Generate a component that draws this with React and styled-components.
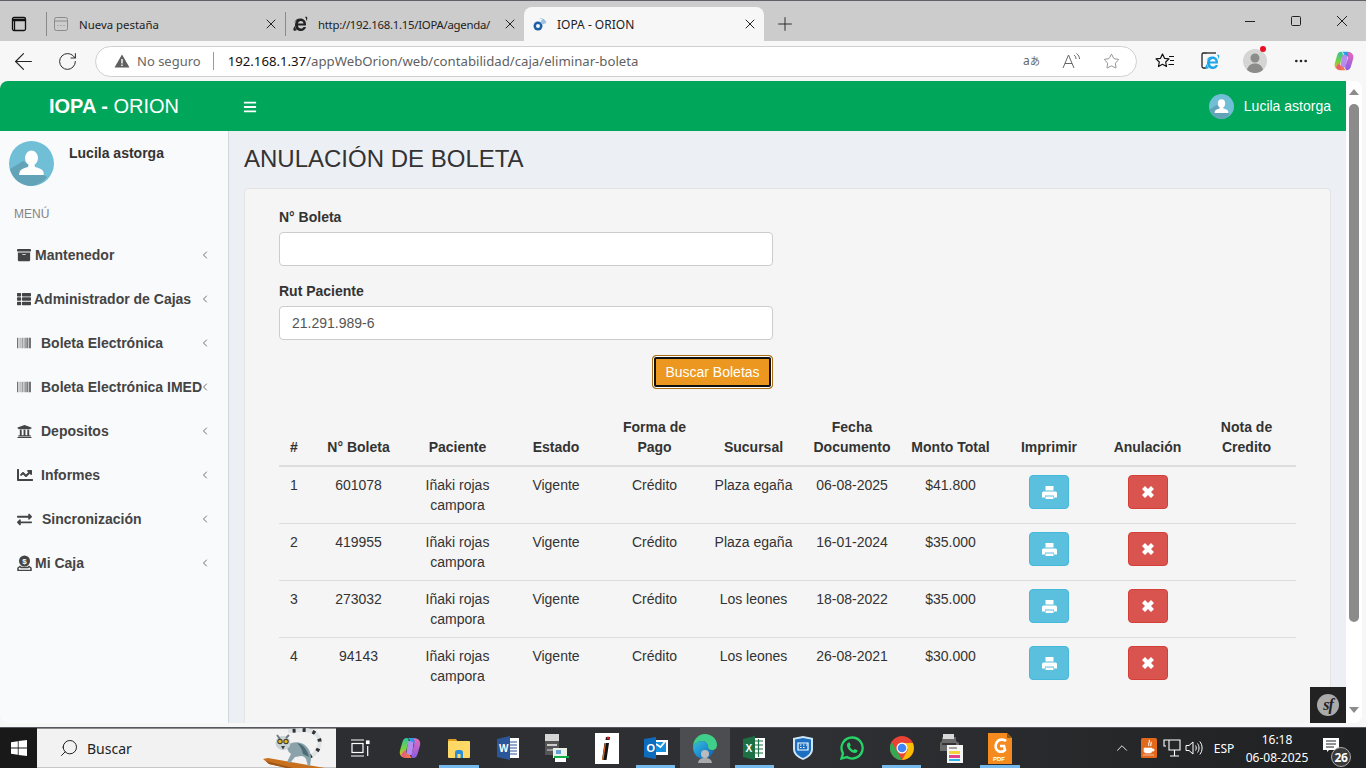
import React from 'react';
import styled, { createGlobalStyle } from 'styled-components';
import { FaArchive, FaThList, FaBarcode, FaUniversity, FaChartLine, FaExchangeAlt, FaBars } from 'react-icons/fa';
import { ArrowLeft, RotateCw, Star, X, Plus, ChevronUp, ChevronLeft, Search, MoreHorizontal } from 'lucide-react';

const Global = createGlobalStyle`
  html, body { margin: 0; padding: 0; height: 100%; overflow: hidden; }
  body { font-family: "Liberation Sans", Arial, sans-serif; font-size: 14px; color: #333; }
  * { box-sizing: border-box; }
`;

const Win = styled.div`
  width: 1366px; height: 768px; display: flex; flex-direction: column; background: #f7f7f7; overflow: hidden;
`;
const TabBar = styled.div`
  height: 41px; flex: none; display: flex; align-items: stretch; background: #cccccc; border-top: 1px solid #5f6266; padding-right: 1px;
`;
const StripBtn = styled.div`
  width: 38px; display: flex; align-items: center; justify-content: center; padding-top: 6px;
`;
const TabSep = styled.div`
  width: 1px; height: 24px; align-self: center; background: #8a8a8a; margin-left: ${p => p.$ml || 0}px; margin-top: 6px;
`;
const Tab = styled.div`
  width: ${p => p.$w}px; display: flex; align-items: center; gap: ${p => p.$gap || 10}px; padding: 6px 6px 0 ${p => p.$pl || 6}px;
  font-family: "Noto Sans", sans-serif; font-size: 11.4px; color: #222; white-space: nowrap; overflow: hidden;
  ${p => p.$active && 'font-size: 12px; background:#f7f7f7; border-radius: 8px 8px 0 0; margin-top: 6px; padding-top: 0;'}
`;
const TabTitle = styled.span`
  flex: 1; min-width: 0;
  ${p => p.$tight && 'letter-spacing: -0.28px; margin-right: -5px;'}
`;
const NewTab = styled.div`
  width: 42px; display: flex; align-items: center; justify-content: center; color: #222; padding-top: 6px;
`;
const Grow = styled.div`flex: 1;`;
const WinBtn = styled.div`
  width: 46px; display: flex; align-items: center; justify-content: center;
`;
const ToolBar = styled.div`
  height: 40px; flex: none; display: flex; align-items: center; padding-left: 1px; background: #f7f7f7;
`;
const NavBtn = styled.div`
  width: ${p => p.$w || 44}px; display: flex; align-items: center; justify-content: center; color: #222; position: relative;
`;
const Address = styled.div`
  width: 1042px; height: 31px; margin: 0 6px 0 6px; border: 1px solid #d0d0d0; border-radius: 16px; background: #fff;
  display: flex; align-items: center; padding-left: 18px; font-family: "Noto Sans", sans-serif; font-size: 13.2px; color: #5f5f5f;
`;
const NoSecure = styled.span`margin-left: 7px; color: #666; font-size: 13px;`;
const AddrSep = styled.div`width: 1px; height: 18px; background: #9a9a9a; margin: 0 14px 0 12px;`;
const Host = styled.span`color: #111;`;
const AddrIcons = styled.div`
  margin-left: auto; display: flex; align-items: center; gap: 21px; padding-right: 16px; color: #666;
`;
const Viewport = styled.div`
  height: 642px; flex: none; display: flex; margin: 0 4px 4px 0;
`;
const Page = styled.div`
  width: 1346px; height: 642px; position: relative; overflow: hidden; border-radius: 8px 0 0 8px; display: flex; flex-direction: column; background: #ecf0f5;
`;
const TopBar = styled.header`
  height: 50px; flex: none; background: #00a65a; display: flex; align-items: center; color: #fff;
`;
const Logo = styled.div`
  width: 228px; padding-left: 49px; font-size: 20px; line-height: 50px; white-space: nowrap;
  b { font-weight: 700; }
`;
const Burger = styled.div`
  width: 44px; display: flex; justify-content: center; font-size: 14px; padding-top: 1px;
`;
const TopUser = styled.div`
  margin-left: auto; display: flex; align-items: center; gap: 10px; padding-right: 15px; font-size: 14px;
`;
const Body = styled.div`
  flex: 1; display: flex; min-height: 0;
`;
const Side = styled.aside`
  width: 229px; flex: none; background: #f9fafc; border-right: 1px solid #d2d6de;
`;
const UserPanel = styled.div`
  height: 72px; padding: 10px 9px; display: flex; gap: 15px; font-weight: 700; color: #333;
  span { line-height: 24px; }
`;
const MenuLabel = styled.div`
  height: 22px; line-height: 22px; padding-left: 14px; margin-bottom: 8px; font-size: 12px; color: #848484;
`;
const MenuRow = styled.div`
  height: 44px; display: flex; align-items: center; padding-left: 17px; font-weight: 700; color: #444; position: relative; white-space: nowrap;
`;
const MenuIcon = styled.span`
  width: ${p => p.$w}px; flex: none; display: flex; align-items: center; font-size: ${p => p.$fs || 14}px;
`;
const Chevron = styled.span`
  position: absolute; left: 199px; top: 16px; color: #555; display: flex;
`;
const Content = styled.main`
  flex: 1; padding: 15px 15px 0; overflow: hidden;
`;
const Title = styled.h1`
  margin: 0 0 16px; font-size: 24px; font-weight: 400; line-height: 26px; color: #333;
`;
const Well = styled.section`
  min-height: 560px; background: #f5f5f5; border: 1px solid #e3e3e3; border-radius: 4px; padding: 18px 34px;
`;
const Form = styled.div`width: 494px;`;
const Label = styled.label`
  display: block; font-weight: 700; line-height: 20px; margin-bottom: 5px; color: #333;
`;
const Input = styled.input`
  display: block; width: 100%; height: 34px; padding: 6px 12px; margin-bottom: 15px; border: 1px solid #ccc; border-radius: 4px;
  background: #fff; font: 14px "Liberation Sans", sans-serif; color: #555;
`;
const FormEnd = styled.div`display: flex; justify-content: flex-end;`;
const SearchBtn = styled.button`
  width: 121px; height: 34px; border: 1px solid #a96c12; border-radius: 4px; background: #ec971f; color: #fff;
  box-shadow: inset 0 0 0 1px #fff, inset 0 0 0 3px #111; font: 14px "Liberation Sans", sans-serif; padding: 0;
`;
const Table = styled.table`
  width: 1017px; margin-top: 20px; border-collapse: collapse; table-layout: fixed; text-align: center;
`;
const Col = styled.col`width: ${p => p.$w}px;`;
const Th = styled.th`
  padding: 8px 8px; line-height: 20px; vertical-align: bottom; border-bottom: 2px solid #ddd; font-weight: 700; color: #333;
`;
const Td = styled.td`
  padding: 8px 8px; line-height: 20px; vertical-align: top; color: #333;
`;
const Tr = styled.tr`
  & + & > td { border-top: 1px solid #ddd; }
`;
const ActionBtn = styled.button`
  width: 40px; height: 34px; display: inline-flex; align-items: center; justify-content: center; padding: 0; border-radius: 4px; color: #fff;
  vertical-align: top;
  background: ${p => (p.$danger ? '#d9534f' : '#5bc0de')};
  border: 1px solid ${p => (p.$danger ? '#d43f3a' : '#46b8da')};
`;
const SfBar = styled.div`
  position: absolute; right: 0; bottom: 0; width: 36px; height: 36px; background: #222; display: flex; align-items: center; justify-content: center;
`;
const SfDot = styled.div`
  width: 22px; height: 22px; border-radius: 50%; background: #aaa; color: #222; display: flex; align-items: center; justify-content: center;
  font: italic 700 16px "Liberation Serif", serif; letter-spacing: -1px;
`;
const Scroll = styled.div`
  width: 16px; flex: none; background: #fff; border-radius: 0 8px 8px 0; display: flex; flex-direction: column; align-items: center;
`;
const ArrowTop = styled.div`
  margin-top: 8px; width: 0; height: 0; border-left: 5px solid transparent; border-right: 5px solid transparent; border-bottom: 6px solid #8b8b8b;
`;
const Thumb = styled.div`
  width: 10px; height: 518px; margin-top: 9px; background: #8b8b8b; border-radius: 5px;
`;
const ArrowBottom = styled.div`
  margin-top: 85px; width: 0; height: 0; border-left: 5px solid transparent; border-right: 5px solid transparent; border-top: 6px solid #8b8b8b;
`;
const Taskbar = styled.footer`
  height: 41px; flex: none; display: flex; align-items: stretch; background: linear-gradient(90deg,#2a2c2f 0%,#2e3033 60%,#1f2022 100%); border-top: 1px solid #55585c; color: #fff;
`;
const Start = styled.div`
  width: 37px; flex: none; background: #191919; display: flex; align-items: center; justify-content: center;
`;
const SearchBox = styled.div`
  width: 299px; flex: none; background: #f2f2f2; color: #222; display: flex; align-items: center; gap: 8px; padding-left: 22px; position: relative;
  font-family: "Noto Sans", sans-serif; font-size: 14px; border-top: 1px solid #8d8d8d; border-bottom: 1px solid #c6c6c6;
`;
const Lemur = styled.div`
  position: absolute; left: 226px; top: -1px; display: flex;
`;
const TaskBtn = styled.div`
  width: 49.2px; flex: none; display: flex; align-items: center; justify-content: center; position: relative;
  ${p => p.$active && 'background: #4b4d50;'}
  ${p => p.$run && `&::after { content: ""; position: absolute; left: 5px; right: 5px; bottom: 0; height: 3px; background: #76b9ed; }`}
`;
const Tray = styled.div`
  margin-left: auto; display: flex; align-items: stretch; padding-right: 9px; font-family: "Noto Sans", sans-serif; font-size: 12px; color: #fff;
`;
const TrayItem = styled.div`
  width: ${p => p.$w}px; margin-right: ${p => p.$mr || 0}px; display: flex; align-items: center; justify-content: center;
`;
const Clock = styled.div`
  width: 64px; padding-top: 2px; display: flex; flex-direction: column; align-items: center; justify-content: center; line-height: 18px; white-space: nowrap;
`;
const Notif = styled.div`
  width: 48px; position: relative; display: flex; align-items: center; justify-content: center;
`;
const NotifBadge = styled.span`
  position: absolute; left: 22px; top: 19px; width: 20px; height: 20px; border-radius: 50%; background: #3a3a3a; border: 1px solid #aaa; color: #fff;
  font-size: 12px; font-weight: 700; display: flex; align-items: center; justify-content: center; letter-spacing: -0.3px;
`;
const Dot = styled.span`
  position: absolute; right: 12px; top: -3px; width: 6px; height: 6px; border-radius: 50%; background: #e81123;
`;

const Avatar = ({ s }) => (
  <svg width={s} height={s} viewBox="0 0 45 45" style={{ flex: 'none' }}>
    <circle cx="22.500" cy="22.500" r="22.500" fill="#71bfd6" />
    <path d="M1 28 L14 20 L38 36 A22.500 22.500 0 0 1 22.500 45 A22.500 22.500 0 0 1 1 28Z" fill="#62a3b8" />
    <ellipse cx="22.500" cy="17" rx="6.500" ry="7.500" fill="#fff" />
    <path d="M20 22h5l1 4c4 1 7 2 8 4 .6 1 .8 3 .8 4H10.200c0-1 .2-3 .8-4 1-2 4-3 8-4z" fill="#fff" />
  </svg>
);
const PageFav = () => (
  <svg width="16" height="16" viewBox="0 0 16 16" fill="none" stroke="#8a8a8a"><rect x="1.500" y="1.500" width="13" height="13" rx="2" /><path d="M1.500 5h13" /><path d="M4.500 9.500h1M7.500 9.500h1M10.500 9.500h1" /></svg>
);
const IeFav = ({ c = '#222', s = 16 }) => (
  <svg width={s} height={s} viewBox="0 0 16 16"><path d="M8.500 2.500C11.800 2.500 14 5 14 8.500v1H6c.1 2 1.300 3 3 3 1.200 0 2-.5 2.500-1.500H14c-.8 2.500-2.600 4-5.200 4C5.200 15 3 12.600 3 9c0-2 .8-3.600 2-4.800-1 .5-2 1.400-2.800 2.600C3 4 5.500 2.500 8.500 2.500zM6 7.500h5.500C11.400 5.800 10.300 5 8.800 5 7.300 5 6.200 5.900 6 7.500z" fill={c} /><path d="M13 1c1.500-.6 2.500 0 2.300 1.500-.2 1-.7 2-1.300 2.700.3-1.300.5-2.800-1-4.200zM2.500 10c-1 2-1.500 3.700-.8 4.500.6.600 2 .3 3.300-.5-1.200-.8-2-2.200-2.500-4z" fill={c} /></svg>
);
const OrionFav = () => (
  <svg width="16" height="16" viewBox="0 0 16 16"><circle cx="6" cy="10" r="4.500" fill="#1f5fa8" /><circle cx="6" cy="10" r="2" fill="#f7f7f7" /><path d="M7 3a5 5 0 0 1 7 5.500 6 6 0 0 0-7-5.500z" fill="#7aa7d8" /><circle cx="11" cy="6" r="2.200" fill="#9fc0e4" /></svg>
);
const WinIcon = () => (
  <svg width="16" height="16" viewBox="0 0 16 16" fill="none" stroke="#111" strokeWidth="1.300"><rect x="1.500" y="1.500" width="13" height="13" rx="1.500" /><path d="M1.500 4h13" strokeWidth="2.500" /><path d="M3.500 5v9" /></svg>
);
const WinMin = () => (<svg width="12" height="12" viewBox="0 0 12 12" stroke="#222"><path d="M1 6.500h10" /></svg>);
const WinMax = () => (<svg width="12" height="12" viewBox="0 0 12 12" fill="none" stroke="#222"><rect x="1.500" y="1.500" width="9" height="9" rx="1" /></svg>);
const WinClose = () => (<svg width="12" height="12" viewBox="0 0 12 12" stroke="#222"><path d="M1 1l10 10M11 1 1 11" /></svg>);
const WarnIcon = () => (
  <svg width="16" height="16" viewBox="0 0 16 16"><path d="M8 1.500 15.500 14.500H.5z" fill="#5f5f5f" /><path d="M7.300 6h1.400v4.500H7.300zM7.300 11.500h1.400V13H7.300z" fill="#fff" /></svg>
);
const Translate = () => (
  <svg width="18" height="16" viewBox="0 0 18 16"><text x="0" y="12" fontSize="12" fontFamily="Noto Sans" fill="#666">a</text><text x="7" y="12" fontSize="10" fontFamily="Noto Sans CJK JP" fill="#666">あ</text></svg>
);
const ReadAloud = () => (
  <svg width="20" height="18" viewBox="0 0 20 18" fill="none" stroke="#666" strokeWidth="1"><path d="M1 16 6.500 3 12 16M3 11.500h7" /><path d="M12 3c1.500 1 2 2.500 2 4M14.500 1.500c2 1.500 3 3.500 3 5.500" /></svg>
);
const FavList = () => (
  <svg width="20" height="18" viewBox="0 0 20 18" fill="none" stroke="#111" strokeWidth="1.200"><path d="M7.500 2 9.500 6.300 14 6.900 10.700 10 11.500 14.500 7.500 12.300 3.500 14.500 4.300 10 1 6.900 5.500 6.300z" strokeLinejoin="round" /><path d="M14 4.500h5M15 8.500h4M13.500 12.500h5.500" /></svg>
);
const IeTool = () => (
  <svg width="20" height="20" viewBox="0 0 20 20" fill="none"><path d="M7 2H3.500A1.500 1.500 0 0 0 2 3.500v12A1.500 1.500 0 0 0 3.500 17H6" stroke="#222" strokeWidth="1.300" /><path d="M7 2h9" stroke="#222" strokeWidth="1.300" /><g transform="translate(4 3)"><IeFav c="#1ea7e8" /></g></svg>
);
const ProfileIcon = () => (
  <svg width="24" height="24" viewBox="0 0 24 24"><circle cx="12" cy="12" r="12" fill="#d5d5d3" /><circle cx="12" cy="9" r="4.500" fill="#8c8c8a" /><path d="M4 21c1-5 4.500-6.500 8-6.500s7 1.500 8 6.500a12 12 0 0 1-16 0z" fill="#8c8c8a" /></svg>
);
const CopilotIcon = ({ s = 22, id }) => (
  <svg width={s} height={s} viewBox="0 0 24 24">
    <defs>
      <linearGradient id={`${id}L`} x1="0" y1="0" x2="0" y2="1"><stop offset="0" stopColor="#2fc4a0" /><stop offset="0.55" stopColor="#7ad13e" /><stop offset="1" stopColor="#f7b11e" /></linearGradient>
      <linearGradient id={`${id}T`} x1="0" y1="0" x2="1" y2="0"><stop offset="0" stopColor="#22b8e8" /><stop offset="1" stopColor="#3a6fe8" /></linearGradient>
      <linearGradient id={`${id}R`} x1="0" y1="0" x2="0" y2="1"><stop offset="0" stopColor="#e86ab8" /><stop offset="1" stopColor="#8a5ce8" /></linearGradient>
      <linearGradient id={`${id}B`} x1="0" y1="0" x2="1" y2="0"><stop offset="0" stopColor="#e8508a" /><stop offset="1" stopColor="#f78a2e" /></linearGradient>
    </defs>
    <path d="M10 5h6l-2 14H8z" fill="#b58cf0" />
    <path d="M9 2h7c2.800 0 4 1.500 4.600 3.500L17 10c-.8-3-2-4.500-4-4.500L12 5c-.4-2-1.500-3-3-3z" fill={`url(#${id}T)`} />
    <path d="M9 2C6 2 5 4 4.300 6.500L2 14.500C1 18 3 21.500 6.500 21.500H9c-1.300-.8-2-2.800-1.500-5L10.500 6C11 4 10.500 2.500 9 2z" fill={`url(#${id}L)`} />
    <path d="M15 22H8c-2.800 0-4-1.500-4.600-3.500L7 14c.8 3 2 4.500 4 4.500l1 .5c.4 2 1.500 3 3 3z" fill={`url(#${id}B)`} />
    <path d="M15 22c3 0 4-2 4.700-4.500L22 9.500C23 6 21 2.500 17.500 2.500H15c1.300.8 2 2.800 1.500 5L13.500 18c-.5 2 0 3.500 1.500 4z" fill={`url(#${id}R)`} />
  </svg>
);
const WinLogo = () => (
  <svg width="16" height="16" viewBox="0 0 16 16" fill="#fff"><path d="M0 2.200 6.800 1.200V7.600H0zM7.600 1.100 16 0V7.600H7.600zM0 8.400H6.800V14.800L0 13.800zM7.600 8.400H16V16L7.600 14.900z" /></svg>
);
const LemurArt = () => (
  <svg width="62" height="41" viewBox="0 0 62 41">
    <path d="M0 31 L5 30 L62 40 V41 H28 L6 36z" fill="#c8701d" />
    <path d="M3 33 L34 41 H28 L6 36z" fill="#9c5516" />
    <path d="M46 29C60 24 62 3 42 2L25 3" fill="none" stroke="#dfe3e5" strokeWidth="3.800" />
    <path d="M46 29C60 24 62 3 42 2L25 3" fill="none" stroke="#2f3336" strokeWidth="3.800" strokeDasharray="3 7" />
    <path d="M24 18c4-5 14-5 19 0 4 4 5 8 5 13l-1 7h-2l-2-7c-1-2-3-3-5-3l-6 1-5 6-3-1 4-8c-3-2-4-5-4-8z" fill="#8aa3ab" />
    <path d="M34 15c5 1 10 5 12 14l-6-3c-1-5-3-8-6-11z" fill="#4e6a75" />
    <ellipse cx="20" cy="15" rx="7.500" ry="7" fill="#c9d2d6" />
    <path d="M14 7l3 4M26 7l-3 3" stroke="#6f7a80" strokeWidth="2" />
    <circle cx="17" cy="13.500" r="2.700" fill="#3a3a30" /><circle cx="23" cy="13.500" r="2.700" fill="#3a3a30" />
    <circle cx="17" cy="13.500" r="1.700" fill="#e2b51d" /><circle cx="23" cy="13.500" r="1.700" fill="#e2b51d" />
    <path d="M18 18h4l-2 3.500z" fill="#3a3f44" />
  </svg>
);
const TaskView = () => (
  <svg width="20" height="18" viewBox="0 0 20 18" fill="none" stroke="#fff" strokeWidth="1.200"><path d="M0 1h13M0 17h13" /><rect x="1" y="4.500" width="11" height="9" /><rect x="15.500" y="2" width="2.500" height="2.500" fill="#fff" /><path d="M16.700 7v10" /></svg>
);
const Folder = () => (
  <svg width="22" height="20" viewBox="0 0 22 20"><path d="M0 2a1 1 0 0 1 1-1h7l2 3H0z" fill="#dd9e22" /><rect y="3" width="22" height="17" rx="1" fill="#ffd866" /><path d="M7 20v-5.500C7 13 8 12 9.500 12h3c1.500 0 2.500 1 2.500 2.500V20z" fill="#2a8fd8" /><path d="M9.500 20v-4h3v4z" fill="#ffd866" /></svg>
);
const Word = () => (
  <svg width="22" height="24" viewBox="0 0 22 24"><rect x="8" y="2" width="14" height="20" fill="#fff" /><path d="M11 6h9M11 9h9M11 12h9M11 15h9M11 18h9" stroke="#2b579a" strokeWidth="1.200" /><path d="M0 3 13 0v24L0 21z" fill="#2b579a" /><text x="2" y="16" fontSize="10" fontWeight="700" fontFamily="Liberation Sans" fill="#fff">W</text></svg>
);
const Printer = () => (
  <svg width="24" height="28" viewBox="0 0 24 28"><rect x="0" y="0" width="14" height="7" fill="#d5d5d5" /><rect x="0" y="7" width="14" height="14" fill="#555" /><rect x="2" y="10" width="10" height="2" fill="#ccc" /><rect x="2" y="15" width="10" height="2" fill="#999" /><rect x="8" y="14" width="14" height="10" fill="#e8f0e8" /><rect x="11" y="16" width="5" height="4" fill="#68a0d8" /><rect x="9" y="22" width="15" height="2" fill="#12b04a" /><rect x="10" y="24" width="11" height="4" fill="#fff" /></svg>
);
const InfoI = () => (
  <svg width="24" height="31" viewBox="0 0 24 31"><rect width="24" height="31" fill="#fff" /><path d="M11 4h4l-.5 3h-4zM9.500 10h4.500L11.500 27H7z" fill="#111" /><path d="M10 10h1l-2.500 17H7z" fill="#e8701a" /><circle cx="13" cy="5" r="1.500" fill="#d02020" /></svg>
);
const Outlook = () => (
  <svg width="24" height="22" viewBox="0 0 24 22"><rect x="9" y="3" width="15" height="15" fill="#fff" /><path d="M11 5h11v10H11z" fill="#1490df" /><path d="m12 7 4.500 3 5-6" stroke="#fff" strokeWidth="1.800" fill="none" /><path d="M0 2 12 0v22L0 20z" fill="#0f6cbd" /><text x="2.500" y="15" fontSize="11" fontWeight="700" fontFamily="Liberation Sans" fill="#fff">O</text></svg>
);
const Edge = () => (
  <svg width="26" height="30" viewBox="0 0 26 30">
    <defs><linearGradient id="edg" x1="0" y1="0" x2="1" y2="1"><stop offset="0" stopColor="#36c2d6" /><stop offset="0.6" stopColor="#1b86d0" /><stop offset="1" stopColor="#0c59a4" /></linearGradient></defs>
    <path d="M13 1c7 0 12 5 12 11 0 3-2 5-5 5-3 0-4-1-4-3 0-3-2-6-6-6C6 8 2 11 1 14 1 7 6 1 13 1z" fill="#3fcf8a" />
    <path d="M1 14c1-3 5-6 9-6 4 0 6 3 6 6 0 3 3 4 6 3-1 4-5 9-10 9C6 26 1 21 1 14z" fill="url(#edg)" />
    <circle cx="13" cy="21" r="4" fill="#bbb" /><path d="M6 30c.5-4 3.500-5 7-5s6.500 1 7 5z" fill="#aaa" />
  </svg>
);
const Excel = () => (
  <svg width="22" height="24" viewBox="0 0 22 24"><rect x="9" y="2" width="13" height="20" fill="#fff" /><path d="M12 5h8M12 9h8M12 13h8M12 17h8M15.500 3v18" stroke="#1d7044" strokeWidth="1.200" /><path d="M0 3 12 0v24L0 21z" fill="#1d7044" /><text x="2.500" y="16" fontSize="10" fontWeight="700" fontFamily="Liberation Sans" fill="#fff">X</text></svg>
);
const Shield = () => (
  <svg width="20" height="24" viewBox="0 0 20 24"><path d="M10 0 20 2v11c0 5-4 8.500-10 11C4 21.500 0 18 0 13V2z" fill="#cfe6f7" /><path d="M10 2 18 3.500V13c0 4-3 7-8 9-5-2-8-5-8-9V3.500z" fill="#1b6ec2" /><path d="M5 7h10v7H5z" fill="none" stroke="#fff" strokeWidth="1.200" /><path d="M7 9h1.500M10 9h1.500M13 9h1M7 11.500h1.500M10 11.500h1.500" stroke="#fff" /></svg>
);
const Whats = () => (
  <svg width="24" height="24" viewBox="0 0 24 24"><path d="M12 1.500A10.500 10.500 0 0 0 3 17.300L1.500 22.500l5.400-1.400A10.500 10.500 0 1 0 12 1.500z" fill="none" stroke="#25d366" strokeWidth="2.300" /><path d="M8.500 6.500c-1 .5-1.500 1.500-1.500 2.700 0 3 3.800 7.800 8 7.800 1.300 0 2.300-.8 2.500-2l-.1-.8-2.700-1.300-1.200 1.300c-1.500-.6-3-2-3.700-3.500l1-1.300-1.200-2.800z" fill="#25d366" /></svg>
);
const Chrome = () => (
  <svg width="24" height="24" viewBox="0 0 24 24"><circle cx="12" cy="12" r="12" fill="#ea4335" /><path d="M12 24A12 12 0 0 1 1.600 6L7.500 16 12 24z" fill="#34a853" /><path d="M12 24 18 13.500 12 7h10.800A12 12 0 0 1 12 24z" fill="#fbbc05" /><circle cx="12" cy="12" r="5.500" fill="#fff" /><circle cx="12" cy="12" r="4.300" fill="#4285f4" /></svg>
);
const PrintSettings = () => (
  <svg width="24" height="30" viewBox="0 0 24 30"><path d="M3 4h14v4l3 2v8H1v-8l2-2z" fill="#6a6a6a" /><rect x="4" y="1" width="11" height="5" fill="#d8d8d8" /><rect x="3" y="10" width="14" height="2" fill="#333" /><rect x="8" y="12" width="16" height="18" fill="#f5f5f5" /><path d="M10 15h8" stroke="#888" strokeWidth="1.500" /><rect x="10" y="18" width="11" height="3" fill="#f5d33a" /><rect x="10" y="22" width="11" height="3" fill="#e2468a" /><rect x="10" y="26" width="11" height="2" fill="#2db4e8" /></svg>
);
const FoxPdf = () => (
  <svg width="24" height="31" viewBox="0 0 24 31"><path d="M0 0h19l5 5v26H0z" fill="#f58a1f" /><path d="M19 0l5 5h-5z" fill="#8a5a1a" /><path d="M18 8c-2-2-7-2-9 1-2 3-2 7 1 9 2 1 5 1 7-1l-1-4h-4" fill="none" stroke="#fff" strokeWidth="2.600" /><text x="5" y="28" fontSize="6" fontWeight="700" fontFamily="Liberation Sans" fill="#fff">PDF</text></svg>
);
const JavaTray = () => (
  <svg width="16" height="20" viewBox="0 0 16 20"><rect width="16" height="20" rx="1.500" fill="#e2681c" /><path d="M8 2c2 2-2 3 0 6M10 4c1 1-1 2 0 4" stroke="#fff" strokeWidth="1.100" fill="none" /><path d="M3 10h8v3c0 1-1 2-2 2H5c-1 0-2-1-2-2zM11 11h2v2h-2zM2 17h11" fill="#fff" stroke="#fff" strokeWidth=".6" /></svg>
);
const Network = () => (
  <svg width="18" height="18" viewBox="0 0 18 18" fill="none" stroke="#fff" strokeWidth="1.100"><path d="M5 1H1v6h2M5 1h12v10H6V1" /><path d="M11.500 11v3M7 17h9M11.500 14v3" /></svg>
);
const Volume = () => (
  <svg width="18" height="18" viewBox="0 0 18 18" fill="none" stroke="#fff" strokeWidth="1"><path d="M1 6.500h3L8 3v12L4 11.500H1z" /><path d="M10.500 6.500c1 1.500 1 3.500 0 5M12.500 4.500c2 2.500 2 6.500 0 9M14.800 2.500c3 3.500 3 9.500 0 13" /></svg>
);
const NotifIcon = () => (
  <svg width="16" height="14" viewBox="0 0 16 14" style={{ marginTop: -7, marginLeft: -4 }}><path d="M0 0h16v12H6l-2 2v-2H0z" fill="#fff" /><path d="M3 3h10M3 6h10M3 9h8" stroke="#222" strokeWidth="1" /></svg>
);
const CajaIcon = () => (
  <svg width="15" height="16" viewBox="0 0 15 16"><circle cx="7.500" cy="6" r="5.500" fill="#444" /><text x="7.500" y="9" fontSize="8" fontWeight="700" textAnchor="middle" fontFamily="Liberation Sans" fill="#f9fafc">$</text><path d="M3 11.500 1 13v2.500h13V13l-2-1.500-1 1H4z" fill="none" stroke="#444" strokeWidth="1.500" /></svg>
);
const PrintGlyph = () => (
  <svg width="15" height="13" viewBox="0 0 15 13" fill="#fff"><path d="M3.500 0h8v4.500h-8z" /><path d="M1.500 5.500h12A1.500 1.500 0 0 1 15 7v4.500h-3v-2H3v2H0V7a1.500 1.500 0 0 1 1.500-1.500z" /><path d="M3.500 10.500h8V13h-8z" /></svg>
);
const CrossGlyph = () => (
  <svg width="12" height="12" viewBox="0 0 12 12" fill="#fff"><path d="M3 0 6 3 9 0 12 3 9 6 12 9 9 12 6 9 3 12 0 9 3 6 0 3z" /></svg>
);

const menu = [
  ['Mantenedor', <FaArchive />, 18],
  ['Administrador de Cajas', <FaThList />, 17],
  ['Boleta Electrónica', <FaBarcode />, 24],
  ['Boleta Electrónica IMED', <FaBarcode />, 24],
  ['Depositos', <FaUniversity />, 24, 15],
  ['Informes', <FaChartLine />, 24, 16],
  ['Sincronización', <FaExchangeAlt />, 25, 15],
  ['Mi Caja', <CajaIcon />, 18],
];
const rows = [
  [1, '601078', 'Plaza egaña', '06-08-2025', '$41.800'],
  [2, '419955', 'Plaza egaña', '16-01-2024', '$35.000'],
  [3, '273032', 'Los leones', '18-08-2022', '$35.000'],
  [4, '94143', 'Los leones', '26-08-2021', '$30.000'],
];
const cols = [30, 99, 99, 98, 99, 99, 98, 99, 98, 99, 99];
const heads = ['#', 'N° Boleta', 'Paciente', 'Estado', 'Forma de Pago', 'Sucursal', 'Fecha Documento', 'Monto Total', 'Imprimir', 'Anulación', 'Nota de Credito'];
const tasks = [
  [<TaskView />], [<CopilotIcon s={24} id="cpTask" />], [<Folder />, 'run'], [<Word />], [<Printer />], [<InfoI />], [<Outlook />, 'run'],
  [<Edge />, 'active'], [<Excel />, 'run'], [<Shield />], [<Whats />], [<Chrome />, 'run'], [<PrintSettings />], [<FoxPdf />, 'run'],
];

export default function App() {
  return (
    <Win>
      <Global />
      <TabBar>
        <StripBtn><WinIcon /></StripBtn>
        <TabSep $ml={8} />
        <Tab $w={238}><PageFav /><TabTitle>Nueva pestaña</TabTitle><X size={16} strokeWidth={1.5} /></Tab>
        <TabSep />
        <Tab $w={238}><IeFav /><TabTitle $tight>http://192.168.1.15/IOPA/agenda/</TabTitle><X size={16} strokeWidth={1.5} /></Tab>
        <Tab $w={240} $active $pl={8} $gap={9}><OrionFav /><TabTitle>IOPA - ORION</TabTitle><X size={16} strokeWidth={1.5} /></Tab>
        <NewTab><Plus size={22} strokeWidth={1} /></NewTab>
        <Grow />
        <WinBtn><WinMin /></WinBtn>
        <WinBtn><WinMax /></WinBtn>
        <WinBtn><WinClose /></WinBtn>
      </TabBar>
      <ToolBar>
        <NavBtn><ArrowLeft size={27} strokeWidth={1} /></NavBtn>
        <NavBtn><RotateCw size={21} strokeWidth={1.1} /></NavBtn>
        <Address>
          <WarnIcon />
          <NoSecure>No seguro</NoSecure>
          <AddrSep />
          <span><Host>192.168.1.37</Host>/appWebOrion/web/contabilidad/caja/eliminar-boleta</span>
          <AddrIcons><Translate /><ReadAloud /><Star size={17} strokeWidth={1} /></AddrIcons>
        </Address>
        <NavBtn $w={44}><FavList /></NavBtn>
        <NavBtn $w={45}><IeTool /></NavBtn>
        <NavBtn $w={46}><ProfileIcon /><Dot /></NavBtn>
        <NavBtn $w={45}><MoreHorizontal size={16} strokeWidth={2} /></NavBtn>
        <NavBtn $w={41}><CopilotIcon id="cpTool" /></NavBtn>
      </ToolBar>
      <Viewport>
        <Page>
          <TopBar>
            <Logo><b>IOPA - </b>ORION</Logo>
            <Burger><FaBars /></Burger>
            <TopUser><Avatar s={25} />Lucila astorga</TopUser>
          </TopBar>
          <Body>
            <Side>
              <UserPanel><Avatar s={45} /><span>Lucila astorga</span></UserPanel>
              <MenuLabel>MENÚ</MenuLabel>
              {menu.map(([t, ic, w, fs]) => (
                <MenuRow key={t}>
                  <MenuIcon $w={w} $fs={fs}>{ic}</MenuIcon>{t}
                  <Chevron><ChevronLeft size={12} strokeWidth={1.7} /></Chevron>
                </MenuRow>
              ))}
            </Side>
            <Content>
              <Title>ANULACIÓN DE BOLETA</Title>
              <Well>
                <Form>
                  <Label>N° Boleta</Label>
                  <Input />
                  <Label>Rut Paciente</Label>
                  <Input defaultValue="21.291.989-6" />
                  <FormEnd><SearchBtn>Buscar Boletas</SearchBtn></FormEnd>
                </Form>
                <Table>
                  <colgroup>{cols.map((w, i) => <Col key={i} $w={w} />)}</colgroup>
                  <thead><tr>{heads.map(h => <Th key={h}>{h}</Th>)}</tr></thead>
                  <tbody>
                    {rows.map(r => (
                      <Tr key={r[0]}>
                        <Td>{r[0]}</Td><Td>{r[1]}</Td><Td>Iñaki rojas campora</Td><Td>Vigente</Td><Td>Crédito</Td>
                        <Td>{r[2]}</Td><Td>{r[3]}</Td><Td>{r[4]}</Td>
                        <Td><ActionBtn><PrintGlyph /></ActionBtn></Td>
                        <Td><ActionBtn $danger><CrossGlyph /></ActionBtn></Td>
                        <Td />
                      </Tr>
                    ))}
                  </tbody>
                </Table>
              </Well>
            </Content>
          </Body>
          <SfBar><SfDot>sf</SfDot></SfBar>
        </Page>
        <Scroll><ArrowTop /><Thumb /><ArrowBottom /></Scroll>
      </Viewport>
      <Taskbar>
        <Start><WinLogo /></Start>
        <SearchBox>
          <Search size={20} strokeWidth={1.2} style={{ transform: 'scaleX(-1)' }} />
          Buscar
          <Lemur><LemurArt /></Lemur>
        </SearchBox>
        {tasks.map(([ic, k], i) => (
          <TaskBtn key={i} $run={k === 'run'} $active={k === 'active'}>{ic}</TaskBtn>
        ))}
        <Tray>
          <TrayItem $w={28}><ChevronUp size={18} strokeWidth={1.2} /></TrayItem>
          <TrayItem $w={25}><JavaTray /></TrayItem>
          <TrayItem $w={22}><Network /></TrayItem>
          <TrayItem $w={22} $mr={1}><Volume /></TrayItem>
          <TrayItem $w={36} $mr={3}>ESP</TrayItem>
          <Clock><span>16:18</span><span>06-08-2025</span></Clock>
          <Notif><NotifIcon /><NotifBadge>26</NotifBadge></Notif>
        </Tray>
      </Taskbar>
    </Win>
  );
}
